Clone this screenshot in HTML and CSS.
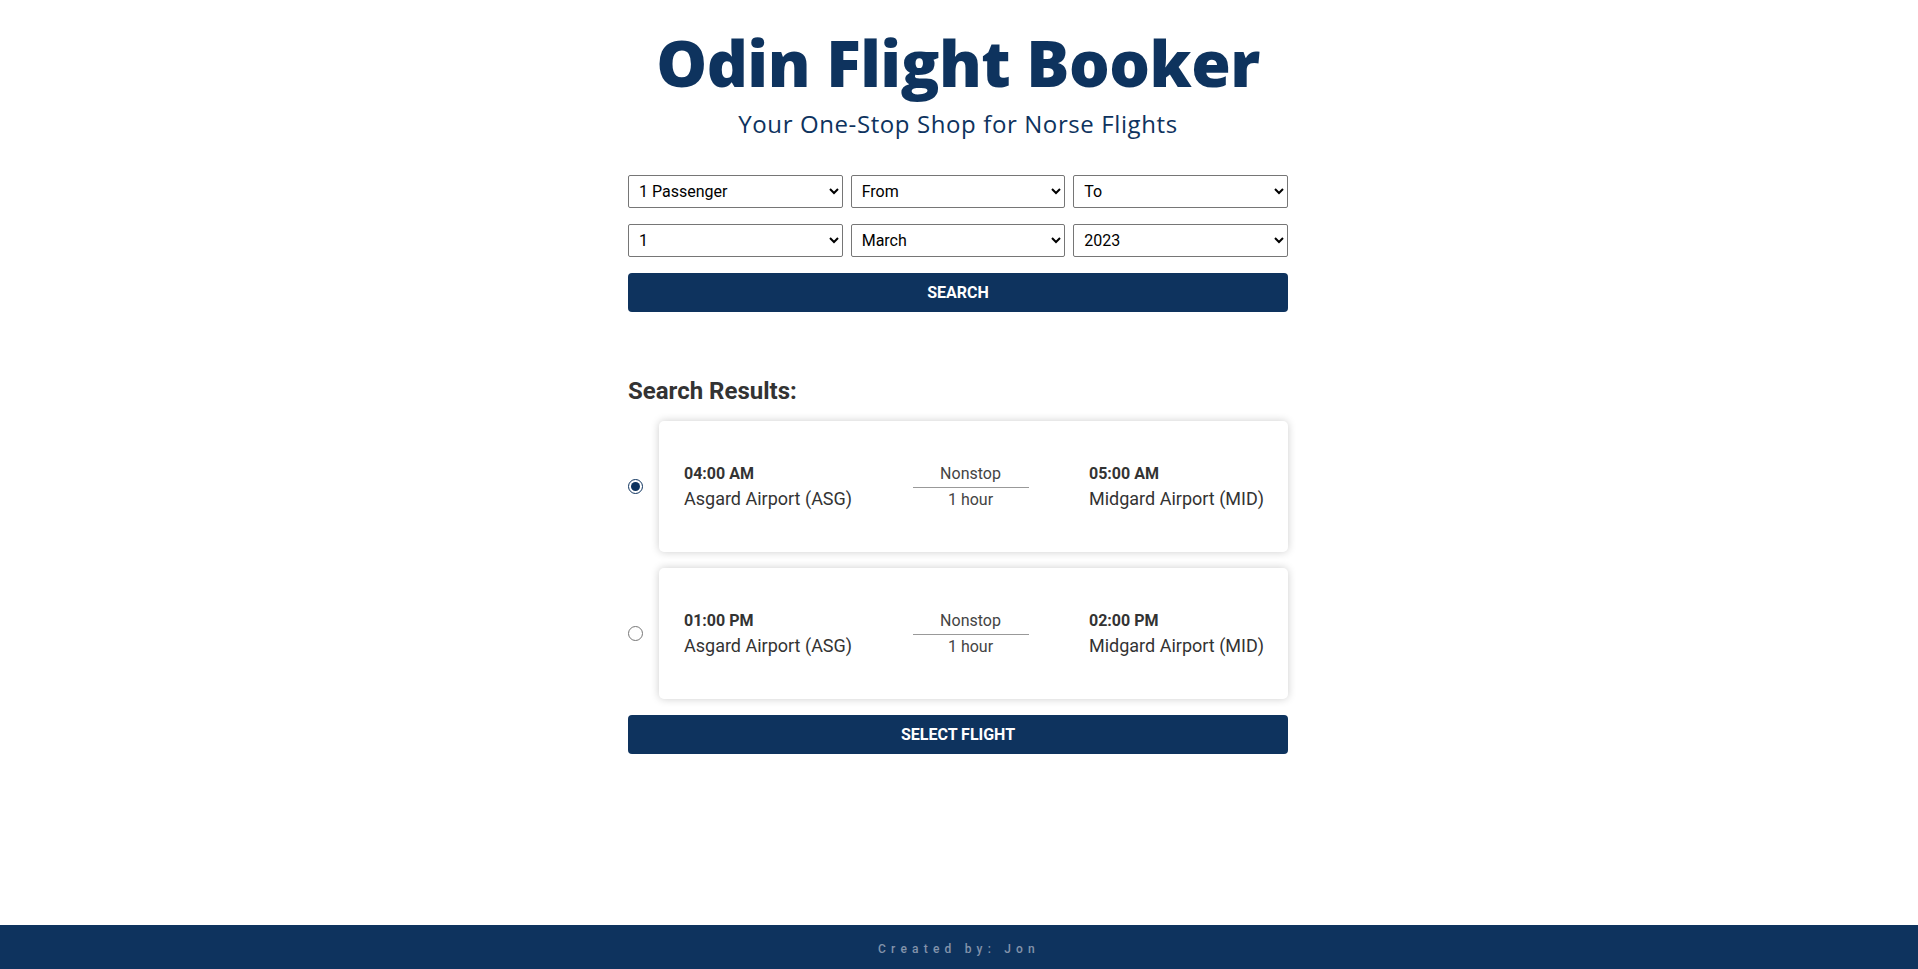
FILE: index.html
```html
<!DOCTYPE html>
<html lang="en">
<head>
<meta charset="utf-8">
<title>Odin Flight Booker</title>
<link rel="stylesheet" href="styles.css">
</head>
<body>
<div class="page">
  <main class="main">
    <header class="header">
      <h1 class="title">Odin Flight Booker</h1>
      <p class="subtitle">Your One-Stop Shop for Norse Flights</p>
    </header>
    <form class="search">
      <div class="row">
        <select class="field"><option>1 Passenger</option></select>
        <select class="field"><option>From</option></select>
        <select class="field"><option>To</option></select>
      </div>
      <div class="row">
        <select class="field"><option>1</option></select>
        <select class="field"><option>March</option></select>
        <select class="field"><option>2023</option></select>
      </div>
      <button type="button" class="btn">SEARCH</button>
    </form>
    <section class="results">
      <h2 class="results-title">Search Results:</h2>
      <div class="flight">
        <input type="radio" name="flight" class="radio" checked>
        <div class="card">
          <div class="stop">
            <div class="time">04:00 AM</div>
            <div class="airport">Asgard Airport (ASG)</div>
          </div>
          <div class="mid">
            <div class="mid-top">Nonstop</div>
            <div class="mid-bot">1 hour</div>
          </div>
          <div class="stop">
            <div class="time">05:00 AM</div>
            <div class="airport">Midgard Airport (MID)</div>
          </div>
        </div>
      </div>
      <div class="flight">
        <input type="radio" name="flight" class="radio">
        <div class="card">
          <div class="stop">
            <div class="time">01:00 PM</div>
            <div class="airport">Asgard Airport (ASG)</div>
          </div>
          <div class="mid">
            <div class="mid-top">Nonstop</div>
            <div class="mid-bot">1 hour</div>
          </div>
          <div class="stop">
            <div class="time">02:00 PM</div>
            <div class="airport">Midgard Airport (MID)</div>
          </div>
        </div>
      </div>
      <button type="button" class="btn">SELECT FLIGHT</button>
    </section>
  </main>
  <footer class="footer">Created by: Jon</footer>
</div>
</body>
</html>
```
FILE: styles.css
```css
* { box-sizing: border-box; }
html, body { margin: 0; padding: 0; }
body {
  font-family: Roboto, "Liberation Sans", sans-serif;
  color: #333;
  background: #fff;
}
.page {
  min-height: 969px;
  display: flex;
  flex-direction: column;
}
.main {
  flex: 1;
  width: 660px;
  margin: 0 auto;
  transform: translateX(-1px);
}
.header {
  text-align: center;
  color: #0e335e;
  padding-top: 20px;
}
.title {
  font-family: "Open Sans", sans-serif;
  font-weight: 800;
  font-size: 64px;
  line-height: 86px;
  margin: 0;
  letter-spacing: -0.5px;
}
.subtitle {
  font-family: "Open Sans", sans-serif;
  font-weight: 400;
  font-size: 24px;
  line-height: 30px;
  letter-spacing: 0.6px;
  margin: 3px 0 0;
}
.search {
  margin-top: 36px;
  display: flex;
  flex-direction: column;
  gap: 16px;
}
.row {
  display: grid;
  grid-template-columns: repeat(3, 1fr);
  gap: 8px;
}
.field {
  height: 33px;
  font-family: Roboto, sans-serif;
  font-size: 16px;
  padding: 0 6px;
  border: 1px solid #767676;
  border-radius: 2px;
  background: #fff;
  color: #000;
}
.btn {
  height: 39px;
  width: 100%;
  border: none;
  border-radius: 4px;
  background: #0e335e;
  color: #fff;
  font-family: Roboto, sans-serif;
  font-weight: 700;
  font-size: 16px;
}
.results {
  margin-top: 65px;
  display: flex;
  flex-direction: column;
  gap: 16px;
}
.results-title {
  font-size: 24px;
  font-weight: 700;
  line-height: 28px;
  margin: 0;
  color: #333;
}
.flight {
  display: flex;
  align-items: center;
  gap: 16px;
}
.radio {
  margin: 0;
  width: 15px;
  height: 15px;
  accent-color: #0e335e;
}
.card {
  flex: 1;
  height: 131px;
  border-radius: 5px;
  box-shadow: 0 0 8px rgba(0, 0, 0, 0.2);
  background: #fff;
  display: flex;
  align-items: center;
  justify-content: space-between;
  padding: 0 24px 0 25px;
}
.time {
  font-weight: 700;
  font-size: 16px;
  line-height: 24px;
}
.airport {
  font-size: 18px;
  line-height: 26px;
}
.mid {
  width: 116px;
  text-align: center;
  color: #444;
  font-size: 16px;
}
.mid-top {
  line-height: 24px;
  border-bottom: 1px solid #999;
  padding-bottom: 1px;
}
.mid-bot {
  line-height: 24px;
}
.footer {
  height: 44px;
  padding-top: 3px;
  background: #0e335e;
  color: #8393ab;
  display: flex;
  align-items: center;
  justify-content: center;
  font-size: 12px;
  font-weight: 500;
  letter-spacing: 5.2px;
}
```
